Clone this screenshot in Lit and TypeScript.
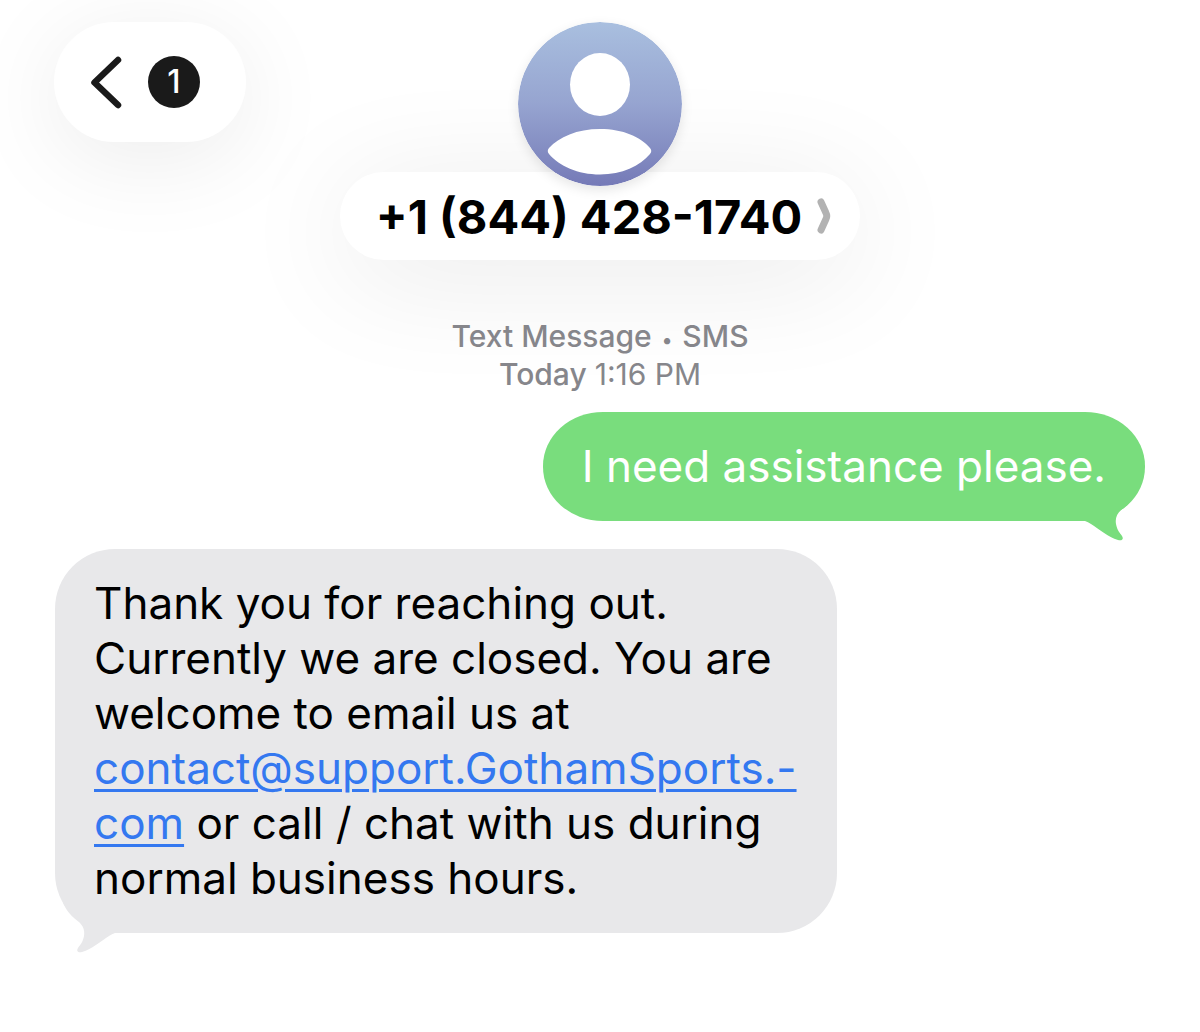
import { LitElement, html, svg, css } from "lit";
import { customElement, property } from "lit/decorators.js";

@customElement("chat-header")
export class ChatHeader extends LitElement {
  @property() name = "";
  @property({ type: Number }) unread = 0;

  static styles = css`
    :host {
      display: block;
    }
    .bar {
      display: grid;
      grid-template-columns: 1fr auto 1fr;
      align-items: start;
      padding: 22px 54px 0;
    }
    button {
      font: inherit;
      color: inherit;
      border: 0;
      margin: 0;
      background: #fff;
      cursor: pointer;
    }
    .back {
      justify-self: start;
      display: flex;
      align-items: center;
      gap: 26px;
      height: 120px;
      padding: 0 46px 0 36px;
      border-radius: 60px;
      box-shadow: 0 16px 96px rgba(0, 0, 0, 0.08);
    }
    .chevron {
      display: block;
      width: 32px;
      height: 54px;
    }
    .count {
      display: grid;
      place-items: center;
      width: 52px;
      height: 52px;
      border-radius: 50%;
      background: #1a1a1a;
      color: #fff;
      font-size: 32px;
      font-weight: 500;
      line-height: 52px;
    }
    .contact {
      display: flex;
      flex-direction: column;
      align-items: center;
    }
    .avatar {
      display: block;
      width: 164px;
      height: 164px;
      margin-bottom: -14px;
      border-radius: 50%;
      z-index: 1;
      box-shadow: 0 4px 12px rgba(0, 0, 0, 0.1);
    }
    .name {
      display: flex;
      align-items: center;
      gap: 14px;
      height: 88px;
      padding: 0 28px 0 36px;
      border-radius: 44px;
      box-shadow: 0 16px 120px rgba(0, 0, 0, 0.09);
      color: #000;
      font-size: 47px;
      font-weight: 700;
      white-space: nowrap;
    }
    .more {
      display: block;
      width: 16px;
      height: 36px;
    }
  `;

  render() {
    return html`
      <header class="bar">
        <button class="back" aria-label="Back, ${this.unread} unread">
          <svg class="chevron" viewBox="0 0 32 54" aria-hidden="true">
            <path d="M28 5 L4.500 27.500 L28 50" fill="none" stroke="#1a1a1a" stroke-width="6.5" stroke-linecap="round" stroke-linejoin="round" />
          </svg>
          <span class="count">${this.unread}</span>
        </button>
        <div class="contact">
          <svg class="avatar" viewBox="0 0 164 164" aria-hidden="true">
            <defs>
              <linearGradient id="sky" x1="0" y1="0" x2="0" y2="1">
                <stop offset="0" stop-color="#a9bfdf" />
                <stop offset="0.5" stop-color="#96a4d0" />
                <stop offset="1" stop-color="#757ab7" />
              </linearGradient>
            </defs>
            <circle cx="82" cy="82" r="82" fill="url(#sky)" />
            <ellipse cx="82" cy="62.5" rx="30" ry="31.5" fill="#fff" />
            <path d="M31 126 C41 115 59 107 82 107 C105 107 123 115 132 126 Q134.500 129 132 132 C122 144 104 152.500 82 152.500 C60 152.500 41 144 31 132 Q28.500 129 31 126 Z" fill="#fff" />
          </svg>
          <button class="name">
            <span>${this.name}</span>
            <svg class="more" viewBox="0 0 16 36" aria-hidden="true">
              <path d="M5 4 L10 15 Q11.500 18 10 21 L5 32" fill="none" stroke="#b2b2b2" stroke-width="7" stroke-linecap="round" stroke-linejoin="round" />
            </svg>
          </button>
        </div>
      </header>
    `;
  }
}

@customElement("chat-bubble")
export class ChatBubble extends LitElement {
  @property({ reflect: true }) side: "sent" | "received" = "received";

  static styles = css`
    :host {
      display: flex;
    }
    :host([side="sent"]) {
      justify-content: flex-end;
    }
    .bubble {
      position: relative;
      box-sizing: border-box;
      max-width: 782px;
      padding: 27px 39px;
      border-radius: 60px;
      font-size: 44px;
      line-height: 55px;
    }
    .sent {
      background: #79dd7d;
      color: #fff;
      border-radius: 60px / 54px;
    }
    .received {
      background: #e8e8ea;
      color: #000;
    }
    .tail {
      position: absolute;
      bottom: -20px;
      width: 60px;
      height: 50px;
    }
    .sent .tail {
      right: 0;
      fill: #79dd7d;
    }
    .received .tail {
      left: 0;
      fill: #e8e8ea;
      transform: scaleX(-1);
    }
  `;

  render() {
    return html`
      <div class="bubble ${this.side}">
        <svg class="tail" viewBox="0 0 60 50" aria-hidden="true">
          ${svg`<path d="M0 0 H52 C47 11 40 16 36 19 C32 23 30 27 31 33 C32 39 35 42 37 45 C39 48 37 50 33 49 C23 46 14 38 6 33 Q3 31 0 30 Z" />`}
        </svg>
        <slot></slot>
      </div>
    `;
  }
}

@customElement("app-root")
export class AppRoot extends LitElement {
  static styles = css`
    :host {
      display: block;
      min-height: 100vh;
      overflow: hidden;
      background: #fff;
      font-family: Inter, "Liberation Sans", sans-serif;
    }
    .thread {
      display: flex;
      flex-direction: column;
      gap: 28px;
      padding: 57px 55px 80px;
    }
    .stamp {
      position: relative;
      margin: 0 0 -9px;
      color: #86868b;
      font-size: 30px;
      font-weight: 500;
      line-height: 38px;
      text-align: center;
    }
    .dot {
      padding: 0 2px;
      font-size: 20px;
      line-height: 1;
    }
    .time {
      font-weight: 400;
    }
    a {
      color: #3478f0;
      text-decoration: underline;
      text-decoration-thickness: 3px;
      text-underline-offset: 5px;
    }
  `;

  render() {
    return html`
      <chat-header name="+1 (844) 428-1740" unread="1"></chat-header>
      <main class="thread">
        <p class="stamp">Text Message <span class="dot">•</span> SMS<br />Today <span class="time">1:16 PM</span></p>
        <chat-bubble side="sent">I need assistance please.</chat-bubble>
        <chat-bubble side="received"
          >Thank you for reaching out. Currently we are closed. You are welcome to email us at
          <a href="mailto:contact@support.GothamSports.com">contact@support.GothamSports.-<br />com</a>
          or call / chat with us during normal business hours.</chat-bubble
        >
      </main>
    `;
  }
}
